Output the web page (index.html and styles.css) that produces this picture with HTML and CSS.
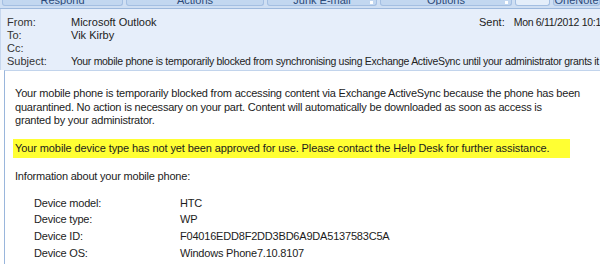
FILE: index.html
```html
<!DOCTYPE html>
<html lang="en">
<head>
  <meta charset="UTF-8" />
  <title>Message</title>
  <link rel="stylesheet" href="styles.css">
</head>
<body>
  <!-- ribbon group labels, cut at the top of the shot -->
  <div class="ribbon">
    <div class="group g-respond"><span>Respond</span></div>
    <div class="group g-actions"><span>Actions</span></div>
    <div class="group g-junk"><span>Junk E-mail</span><i class="arrow"></i></div>
    <div class="group g-options"><span>Options</span><i class="arrow"></i></div>
    <div class="group g-blank"></div>
    <div class="group g-onenote"><span>OneNote</span></div>
  </div>

  <!-- message header -->
  <div class="header">
    <div class="hrow">
      <span class="hlabel">From:</span><span class="hval from">Microsoft Outlook</span>
      <span class="sent"><span class="slabel">Sent:</span><span class="sdate">Mon 6/11/2012 10:11 AM</span></span>
    </div>
    <div class="hrow"><span class="hlabel">To:</span><span class="hval">Vik Kirby</span></div>
    <div class="hrow"><span class="hlabel">Cc:</span><span class="hval"></span></div>
    <div class="hrow"><span class="hlabel">Subject:</span><span class="hval subject">Your mobile phone is temporarily blocked from synchronising using Exchange ActiveSync until your administrator grants it access</span></div>
  </div>

  <!-- message body -->
  <div class="body">
    <p class="intro">Your mobile phone is temporarily blocked from accessing content via Exchange ActiveSync because the phone has been<br>quarantined. No action is necessary on your part. Content will automatically be downloaded as soon as access is<br>granted by your administrator.</p>
    <p class="notice">Your mobile device type has not yet been approved for use. Please contact the Help Desk for further assistance.</p>
    <p class="info">Information about your mobile phone:</p>
    <div class="device">
      <span>Device model:</span><span>HTC</span>
      <span>Device type:</span><span>WP</span>
      <span>Device ID:</span><span>F04016EDD8F2DD3BD6A9DA5137583C5A</span>
      <span>Device OS:</span><span>Windows Phone7.10.8107</span>
    </div>
  </div>
</body>
</html>
```

FILE: styles.css
```css
/* --- Reset & base ---------------------------------------------------- */
* { box-sizing: border-box; margin: 0; padding: 0; }
body { font-family: "Liberation Sans", Arial, sans-serif; font-size: 11px; color: #1a1a1a; background: #fff; width: 600px; height: 264px; overflow: hidden; }

/* --- Ribbon bottom ----------------------------------------------------- */
.ribbon {
  height: 9px; display: flex; gap: 3px; padding: 0 0 0 2px;
  background: #cfdff3; border-bottom: 1px solid #9db9dd; overflow: hidden;
}
.group {
  position: relative; height: 6px; display: flex; justify-content: center; align-items: flex-end;
  background: #c2d7f0; border: 1px solid #a4bfe2; border-top: none; border-radius: 0 0 3px 3px;
  color: #2c4a78; font-size: 11px; overflow: hidden;
}
.group span { line-height: 11px; margin-bottom: -1px; }
.arrow { position: absolute; right: 3px; bottom: 1px; width: 3px; height: 3px; background: #fff; }
.g-respond { width: 121px; }
.g-actions { width: 138px; }
.g-junk { width: 110px; }
.g-options { width: 132px; }
.g-blank { width: 35px; background: #e4eefa; }
.g-onenote { flex: 1; }

/* --- Header ------------------------------------------------------------ */
.header {
  height: 61px; background: #e6eefa; padding: 7px 0 0 6px;
  border-left: 1px solid #c7d7ee; overflow: hidden;
}
.hrow { display: flex; height: 13px; line-height: 13px; white-space: nowrap; }
.hlabel { flex: 0 0 64px; color: #333; }
.hval { color: #222; }
.hval.from { flex: 0 0 408px; }
.hval.subject { font-size: 10.5px; letter-spacing: -0.3px; }
.sent { color: #222; }
.slabel { margin-right: 9px; }
.sdate { font-size: 10.5px; letter-spacing: -0.3px; }

/* --- Body -------------------------------------------------------------- */
.body {
  margin-left: 4px; height: 200px; background: #fff;
  border-left: 1px solid #9ab6dc; border-top: 1px solid #c2d4ec;
  padding: 16px 0 0 10px; line-height: 13.5px; color: #1c1c1c; letter-spacing: -0.2px;
  white-space: nowrap;
}
.intro { margin-bottom: 11px; }
.notice { display: inline-block; background: #ffff33; padding: 3px 20px 3px 2px; margin-left: -2px; letter-spacing: -0.1px; }
.info { margin-top: 12px; }
.device {
  display: grid; grid-template-columns: 146px auto; row-gap: 3.3px;
  padding: 13px 0 0 19px; line-height: 13.5px;
}
```
